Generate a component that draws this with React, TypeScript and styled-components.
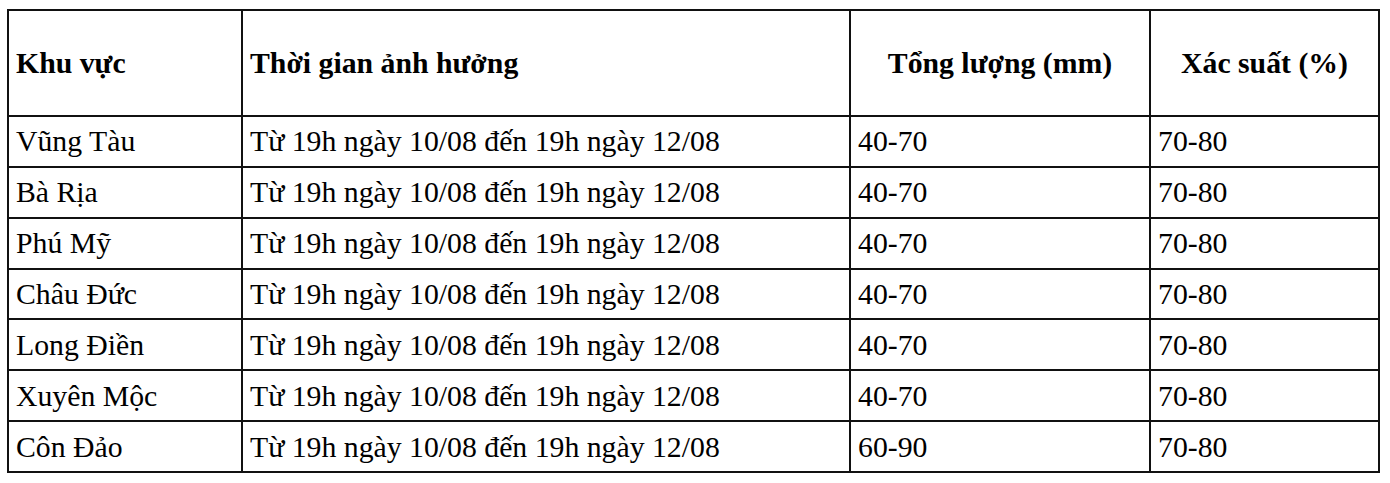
import React from 'react'
import styled, { createGlobalStyle } from 'styled-components'

const GlobalStyle = createGlobalStyle`
  html, body {
    margin: 0;
    padding: 0;
    background: #ffffff;
  }
  body {
    font-family: 'Liberation Serif', 'Times New Roman', serif;
    color: #000000;
  }
`

const Page = styled.div`
  padding: 9px 0 0 7px;
`

const Table = styled.table`
  border-collapse: separate;
  border-spacing: 0;
  table-layout: fixed;
  width: 1373px;
  border-top: 2px solid #111111;
  border-left: 2px solid #111111;
  font-family: 'Liberation Serif', 'Times New Roman', serif;
  font-size: 29.75px;
  color: #000000;
`

const HeadCell = styled.th<{ $center?: boolean }>`
  box-sizing: border-box;
  height: 106px;
  padding: ${({ $center }) => ($center ? '0' : '0 0 0 7px')};
  border-right: 2px solid #111111;
  border-bottom: 2px solid #111111;
  font-weight: bold;
  text-align: ${({ $center }) => ($center ? 'center' : 'left')};
  vertical-align: middle;
  white-space: nowrap;
`

const Cell = styled.td`
  box-sizing: border-box;
  height: 50.86px;
  padding: 0 0 0 7px;
  border-right: 2px solid #111111;
  border-bottom: 2px solid #111111;
  font-weight: normal;
  text-align: left;
  vertical-align: middle;
  white-space: nowrap;
`

const rows = [
  { area: 'Vũng Tàu', amount: '40-70' },
  { area: 'Bà Rịa', amount: '40-70' },
  { area: 'Phú Mỹ', amount: '40-70' },
  { area: 'Châu Đức', amount: '40-70' },
  { area: 'Long Điền', amount: '40-70' },
  { area: 'Xuyên Mộc', amount: '40-70' },
  { area: 'Côn Đảo', amount: '60-90' },
]

const period = 'Từ 19h ngày 10/08 đến 19h ngày 12/08'

export default function App() {
  return (
    <>
      <GlobalStyle />
      <Page>
        <Table>
          <colgroup>
            <col style={{ width: 234 }} />
            <col style={{ width: 608 }} />
            <col style={{ width: 300 }} />
            <col style={{ width: 229 }} />
          </colgroup>
          <thead>
            <tr>
              <HeadCell>Khu vực</HeadCell>
              <HeadCell>Thời gian ảnh hưởng</HeadCell>
              <HeadCell $center>Tổng lượng (mm)</HeadCell>
              <HeadCell $center>Xác suất (%)</HeadCell>
            </tr>
          </thead>
          <tbody>
            {rows.map((r) => (
              <tr key={r.area}>
                <Cell>{r.area}</Cell>
                <Cell>{period}</Cell>
                <Cell>{r.amount}</Cell>
                <Cell>70-80</Cell>
              </tr>
            ))}
          </tbody>
        </Table>
      </Page>
    </>
  )
}
